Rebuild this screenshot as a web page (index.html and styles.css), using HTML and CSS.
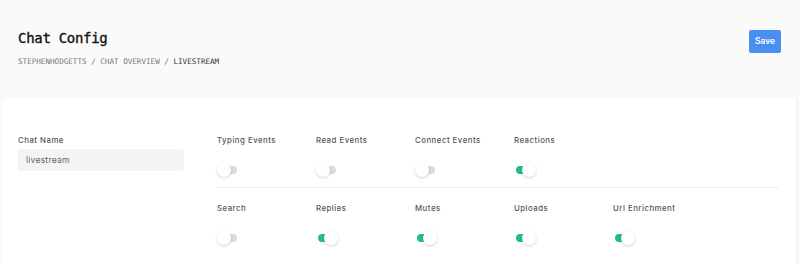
FILE: index.html
```html
<!DOCTYPE html>
<html lang="en">
<head>
	<meta charset="UTF-8" />
	<title>Chat Config</title>
	<link rel="stylesheet" href="styles.css">
</head>
<body>
<div class="head">
	<div class="head_text">
		<h1>Chat Config</h1>
		<p class="crumbs">STEPHENHODGETTS / CHAT OVERVIEW / <b>LIVESTREAM</b></p>
	</div>
	<a href="#" class="btn">Save</a>
</div>
<div class="card">
	<div class="name_col">
		<label class="lbl">Chat Name</label>
		<div class="field">livestream</div>
	</div>
	<div class="opts">
		<div class="row">
			<div class="opt"><label class="lbl">Typing Events</label><span class="tgl"></span></div>
			<div class="opt"><label class="lbl">Read Events</label><span class="tgl"></span></div>
			<div class="opt"><label class="lbl">Connect Events</label><span class="tgl"></span></div>
			<div class="opt"><label class="lbl">Reactions</label><span class="tgl on"></span></div>
		</div>
		<div class="row">
			<div class="opt"><label class="lbl">Search</label><span class="tgl"></span></div>
			<div class="opt"><label class="lbl">Replies</label><span class="tgl on"></span></div>
			<div class="opt"><label class="lbl">Mutes</label><span class="tgl on"></span></div>
			<div class="opt"><label class="lbl">Uploads</label><span class="tgl on"></span></div>
			<div class="opt"><label class="lbl">Url Enrichment</label><span class="tgl on"></span></div>
		</div>
	</div>
</div>
</body>
</html>
```

FILE: styles.css
```css
body{margin:0;background:#fafafa;font-family:'Inter','Liberation Sans',sans-serif;color:#222;}
.head{display:flex;justify-content:space-between;align-items:flex-start;padding:30px 19px 0 18px;height:67px;}
h1{margin:0;font:normal 14px/16px 'DejaVu Sans Mono',monospace;color:#111;letter-spacing:-0.3px;-webkit-text-stroke:0.35px #111;}
.crumbs{margin:11px 0 0;font:normal 7.6px/10px 'DejaVu Sans Mono',monospace;color:#777;}
.crumbs b{font-weight:normal;color:#333;}
a.btn{display:block;width:32px;height:23px;background:#4b8ef2;border-radius:2px;color:#fff;font:600 8.5px/23px 'Inter','Liberation Sans',sans-serif;text-align:center;text-decoration:none;}
.card{display:flex;gap:33px;margin:1px 3px 0 2px;padding:36px 17px 20px 16px;background:#fff;border-radius:3px;box-shadow:0 0 2px rgba(0,0,0,.06);border-right:1px solid #eee;min-height:120px;}
.lbl{display:block;font-size:7.8px;line-height:12px;font-weight:500;letter-spacing:.5px;color:#555;}
.name_col{width:166px;}
.field{margin-top:3px;height:22px;background:#f4f4f4;border-radius:2px;padding-left:8px;font-size:8.6px;line-height:22px;color:#666;letter-spacing:.2px;}
.opts{flex:1;}
.row{display:flex;padding:0 0 10px;}
.row+.row{border-top:1px solid #eee;padding-top:14px;}
.opt{width:99px;}
.tgl{display:block;position:relative;width:22px;height:14px;margin-top:17px;}
.tgl:before{content:"";position:absolute;left:2px;top:3px;width:18px;height:8px;border-radius:4px;background:#dcdcdc;}
.tgl:after{content:"";position:absolute;left:0;top:0;width:14px;height:14px;border-radius:50%;background:#fff;box-shadow:0 1px 3px rgba(0,0,0,.18);}
.tgl.on:before{background:#1fbf86;}
.tgl.on:after{left:8px;}
```
